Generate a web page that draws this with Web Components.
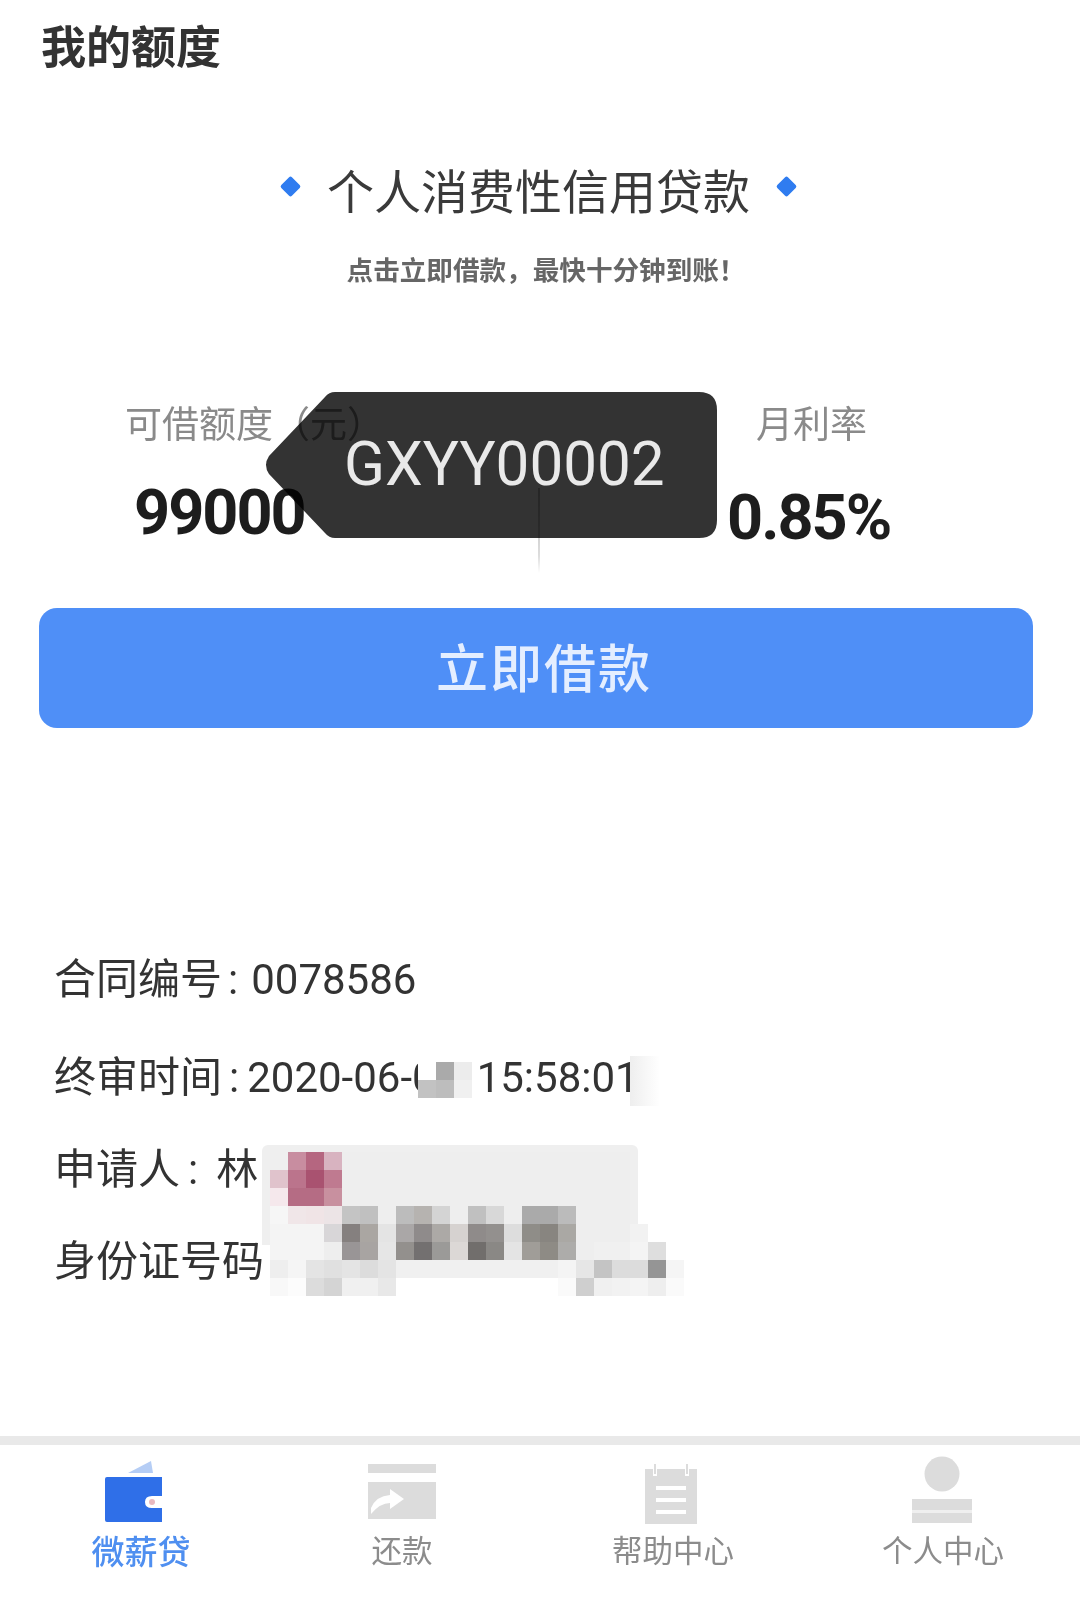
<!doctype html>
<html lang="zh"><head><meta charset="utf-8"><title>我的额度</title>
<style>html,body{margin:0;background:#fff}body{font-family:"Noto Sans CJK SC","Noto Sans",sans-serif}</style>
</head><body>
<x-app></x-app>
<script>
const CJK='"Noto Sans CJK SC",sans-serif', NUM='Roboto,"Noto Sans CJK SC",sans-serif';
function def(name,html,init){customElements.define(name,class extends HTMLElement{constructor(){super();this.attachShadow({mode:'open'}).innerHTML=html;}connectedCallback(){init&&init.call(this,this.shadowRoot)}})}

def('x-header',`<style>:host{display:flex;align-items:center;height:89px;padding-left:41px;box-sizing:border-box;font:700 45px/1 ${CJK};color:#333;filter:blur(.6px)}</style>我的额度`);

def('x-hero',`<style>:host{display:block;text-align:center;filter:blur(.7px)}
.h{display:flex;justify-content:center;align-items:center;height:66px;margin-top:66px;gap:29px;font:400 47px/1 ${CJK};color:#3a3a3a;padding-right:3px}
i{width:15px;height:15px;background:#2f7cf0;transform:rotate(45deg);border-radius:2px;position:relative;top:-2px}
.s{margin-top:30px;height:36px;padding-left:12px;font:700 26.6px/36px ${CJK};color:#666}</style>
<div class="h"><i></i><span>个人消费性信用贷款</span><i></i></div><div class="s">点击立即借款，最快十分钟到账！</div>`);

def('x-stats',`<style>:host{display:grid;grid-template-columns:539px 1fr;margin-top:113px;height:211px;position:relative}
.c{display:flex;flex-direction:column;filter:blur(.5px)}
.l{height:44px;font:400 37px/44px ${CJK};color:#8a8a8a}
.v{margin-top:37px;font:700 63px/64px ${NUM};color:#1d1d1d;letter-spacing:-2px}
.a{padding-left:125px}.a .v{padding-left:9px}
.b{padding-left:218px}.b .l{margin-left:-1px}.b .v{margin:42px 0 0 -30px}
.d{position:absolute;left:538px;top:88px;height:85px;width:2px;background:linear-gradient(#bbb,#ddd 80%,#fff)}</style>
<div class="c a"><div class="l">可借额度（元）</div><div class="v">99000</div></div>
<div class="c b"><div class="l">月利率</div><div class="v">0.85%</div></div><div class="d"></div>`);

def('x-tag',`<style>:host{position:absolute;left:265px;top:392px;width:452px;height:146px;display:block}
svg{position:absolute;inset:0}
span{position:absolute;left:79px;top:43px;font:400 60.2px/1 Roboto,sans-serif;color:#e9e9e9;white-space:nowrap}</style>
<svg width="452" height="146" viewBox="0 0 452 146"><path fill="rgba(0,0,0,.8)" d="M70 0H434Q452 0 452 18V128Q452 146 434 146H70Q64 146 60 141L4 82Q-2 73 4 64L60 5Q64 0 70 0Z"/></svg><span>GXYY00002</span>`);

def('x-button',`<style>:host{display:flex;justify-content:center;align-items:center;margin:0 47px 0 39px;height:120px;box-sizing:border-box;background:#4f8ff7;border-radius:18px;color:#e4eeff;font:500 52px/1 ${CJK};filter:blur(.5px);padding:0 0 4px 16px;letter-spacing:2px}</style><slot></slot>`);

def('x-row',`<style>:host{display:flex;align-items:center;height:92px;padding-left:54px;font:400 42px/1 ${NUM};color:#333;white-space:nowrap;filter:blur(.35px)}</style><slot></slot>`);

def('x-mosaic',`<style>:host{position:absolute;display:grid;grid-auto-rows:var(--s,18px);grid-template-columns:repeat(var(--n),var(--s,18px))}b{display:block}</style>`,function(r){
  const rows=this.dataset.rows.split('|');this.style.setProperty('--n',rows[0].split(' ').length);
  rows.forEach(l=>l.split(' ').forEach(c=>{const b=document.createElement('b');b.style.background=c==='-'?'transparent':'#'+c;r.appendChild(b)}));
});

def('x-tabs',`<style>:host{position:absolute;left:0;right:0;top:1436px;height:168px;display:grid;grid-template-columns:282px 240px 302px 238px;border-top:9px solid #e9e9e9;box-sizing:border-box;filter:blur(.7px)}</style><slot></slot>`);
def('x-tab',`<style>:host{display:flex;flex-direction:column;align-items:center;height:159px;font:400 30.5px/1 ${CJK};color:#8c8c8c}
:host([active]){color:#4f8ff0;font-weight:500;font-size:33px}
.i{height:92px;display:flex;justify-content:center}.t{margin-top:-3px}</style><div class="i"><slot name="icon"></slot></div><div class="t"><slot></slot></div>`);

def('x-app',`<style>:host{display:block;position:relative;width:1080px;height:1604px;overflow:hidden;background:#fff}
.info{margin-top:202px}
.wp{position:absolute;background:#fff}
svg{display:block}
</style>
<x-header></x-header><x-hero></x-hero><x-stats></x-stats>
<x-button style="margin-top:-3px">立即借款</x-button>
<div class="info">
<x-row style="height:100px">合同编号<span style="margin:0 13px 0 6px">:</span>0078586</x-row>
<x-row style="height:96px">终审时间<span style="margin:0 8px 0 7px">:</span>2020-06-0<span style="margin-left:41px">15:58:01</span></x-row>
<x-row style="height:88px">申请人<span style="margin:0 18px 0 8px">:</span>林</x-row>
<x-row style="height:96px">身份证号码</x-row>
</div>
<div class="wp" style="left:418px;top:1056px;width:54px;height:50px"></div>
<x-mosaic style="left:418px;top:1062px;--s:18px" data-rows="- aaaaaa ececec|c2c2c2 bdbdbd f0f0f0"></x-mosaic>
<div class="wp" style="left:630px;top:1056px;width:30px;height:50px;background:linear-gradient(90deg,#eee,#fff)"></div>
<div class="wp" style="left:262px;top:1145px;width:376px;height:100px;background:#efefef;border-radius:6px 6px 0 0"></div>
<x-mosaic style="left:252px;top:1152px" data-rows="- - c88da0 b56680 d8b3c0 eeeeee eeeeee eeeeee eeeeee eeeeee eeeeee eeeeee eeeeee eeeeee eeeeee eeeeee eeeeee eeeeee eeeeee eeeeee eeeeee - - -|- e0c3cc bb748c a95270 bf7a90 eeeeee eeeeee eeeeee eeeeee eeeeee eeeeee eeeeee eeeeee eeeeee eeeeee eeeeee eeeeee eeeeee eeeeee eeeeee eeeeee - - -|- f5e8ec b56c84 b56c84 c8909f eeeeee eeeeee eeeeee eeeeee eeeeee eeeeee eeeeee eeeeee eeeeee eeeeee eeeeee eeeeee eeeeee eeeeee eeeeee eeeeee - - -|- f6f6f6 f0e6e8 f0e4e6 ece4e6 c4c4c4 c0c0c0 eeeeee bcbcbc b6b3b0 d4d4d4 eeeeee c0c0c0 d8d8d8 eeeeee aaaaaa aaaaaa bbbbbb eeeeee eeeeee eeeeee - - -|- f4f4f4 f4f4f4 f4f4f4 d8d6d8 85807f aaa6a2 e4e4e4 aaa7a7 8f8b8b aca9a6 d6d2d0 8f8b8a 93908e dddddd 8f8d88 888580 aaa8a4 eeeeee eeeeee eeeeee f2f2f2 - -|- f4f4f4 f4f4f4 f4f4f4 eeeeee 999596 a8a4a2 e6e6e6 93908d 737070 9b9a98 dcd8d6 716e6c 8a8885 e4e4e4 a09d98 8e8b85 adacaa eeeeee f0f0f0 f0f0f0 f4f4f4 dedede -|- eeeeee f5f5f5 e4e4e4 e0e0e0 e4e4e4 dcdcdc e4e4e4 f0f0f0 f0f0f0 f0f0f0 f0f0f0 f0f0f0 f0f0f0 f0f0f0 f0f0f0 f0f0f0 f4f4f4 e6e6e6 c4c4c4 dcdcdc dcdcdc 959595 f5f5f5|- f8f8f8 fcfcfc dcdcdc d4d4d4 f0f0f0 f0f0f0 e8e8e8 ffffff ffffff ffffff ffffff ffffff ffffff ffffff ffffff ffffff fafafa cfcfcf f0f0f0 f2f2f2 f4f4f4 eeeeee fafafa"></x-mosaic>
<x-tag></x-tag>
<x-tabs>
<x-tab active><svg slot="icon" style="margin:15px 0 0 -14px" width="60" height="64" viewBox="0 0 60 64"><path fill="#b5cdf5" d="M24 13 47 1 49 13Z"/><path fill="#2f6fe8" d="M3 17H58V36H48Q41 36 41 42T48 48H58V62H3Q1 62 1 60V19Q1 17 3 17Z"/><circle cx="48" cy="42" r="3" fill="#e9b9c0"/></svg>微薪贷</x-tab>
<x-tab><svg slot="icon" style="margin:19px 0 0" width="68" height="56" viewBox="0 0 68 56"><path fill="#dcdcdc" d="M0 0H68V9H0ZM0 18H68V55H0Z"/><path fill="#fff" d="M3 44Q8 32 22 31V25L36 35 22 45V39Q12 39 3 50Z"/></svg>还款</x-tab>
<x-tab><svg slot="icon" style="margin:19px 0 0 -4px" width="54" height="60" viewBox="0 0 54 60"><path fill="#dcdcdc" d="M1 5H9V12H13V5H41V12H45V5H53V60H1Z"/><path fill="#dcdcdc" d="M10 0H12V10H10ZM42 0H44V10H42Z"/><path fill="#fff" d="M12 22H42V26H12ZM12 34H42V38H12ZM12 46H42V50H12Z"/></svg>帮助中心</x-tab>
<x-tab><svg slot="icon" style="margin:11px 0 0 -2px" width="60" height="68" viewBox="0 0 60 68"><circle cx="30" cy="18" r="17.5" fill="#dcdcdc"/><path fill="#dcdcdc" d="M0 43H60V67H0Z"/><path fill="#efefef" d="M0 54H60V57H0Z"/></svg>个人中心</x-tab>
</x-tabs>`);
</script>
</body></html>
